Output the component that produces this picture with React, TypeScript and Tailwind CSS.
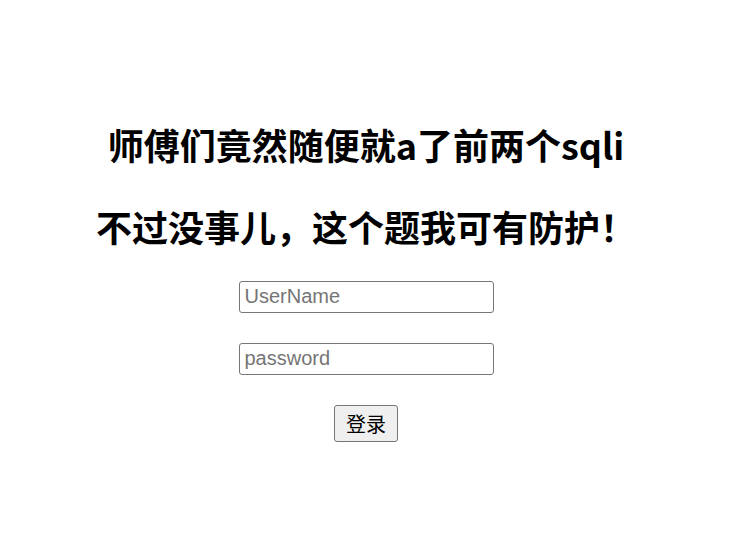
export default function App() {
  return (
    <div className="min-h-[542px] w-[732px] bg-white pt-[118px] text-black">
      <div className="flex flex-col items-center">
        <h1 className="text-[36px] leading-[52px] font-bold [font-family:'Noto_Sans_CJK_SC',sans-serif]">
          师傅们竟然随便就a了前两个sqli
        </h1>
        <h1 className="mt-[30px] text-[36px] leading-[52px] font-bold [font-family:'Noto_Sans_CJK_SC',sans-serif]">
          不过没事儿，这个题我可有防护！
        </h1>
        <form className="mt-[29px] flex flex-col items-center">
          <input
            type="text"
            placeholder="UserName"
            className="h-[32px] w-[255px] rounded-[3px] border border-[#767676] pl-[5px] pr-[4px] pb-[1px] text-[20px] text-black placeholder:text-[#757575] [font-family:'Liberation_Sans',Arial,sans-serif]"
          />
          <input
            type="password"
            placeholder="password"
            className="mt-[30px] h-[32px] w-[255px] rounded-[3px] border border-[#767676] pl-[5px] pr-[4px] pb-[1px] text-[20px] text-black placeholder:text-[#757575] [font-family:'Liberation_Sans',Arial,sans-serif]"
          />
          <button
            type="button"
            className="mt-[30px] h-[37px] w-[64px] rounded-[3px] border border-[#767676] bg-[#efefef] text-[20px] leading-none [font-family:'Noto_Sans_CJK_SC',sans-serif]"
          >
            登录
          </button>
        </form>
      </div>
    </div>
  )
}
